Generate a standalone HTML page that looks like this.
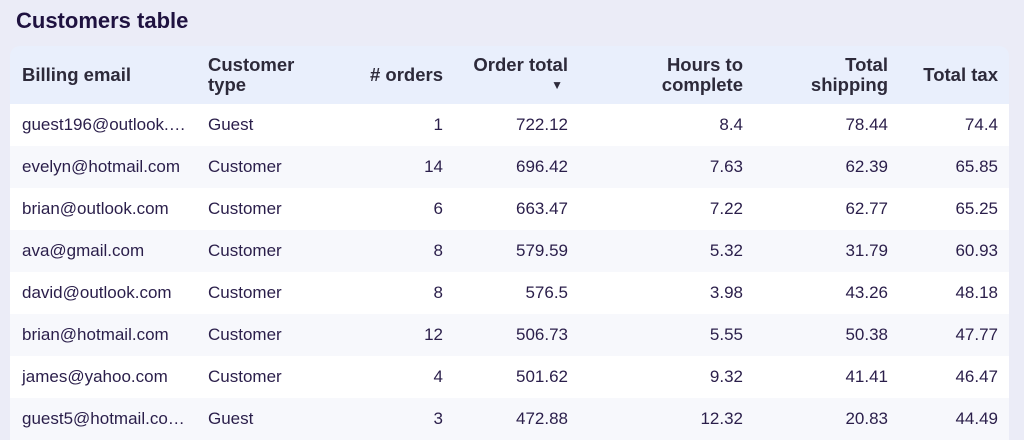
<!DOCTYPE html><html><head><style>
body{margin:0;width:1024px;height:434px;overflow:hidden;background:#ebecf7;font-family:"Liberation Sans",sans-serif;}
h1{position:absolute;left:16px;top:8px;margin:0;font-size:22px;font-weight:bold;color:#1f1240;letter-spacing:0px}
.t{position:absolute;left:10px;top:46px;width:999px;border-radius:10px 10px 0 0;overflow:hidden}
.hd{height:58px;background:#e9effc;position:relative}
.r{height:42px;position:relative;background:#fff}
.r:nth-child(even){background:#f7f8fc}
.c{position:absolute;font-size:17px;color:#2a1e4a;top:11px;white-space:nowrap}
.h{position:absolute;font-size:18.5px;font-weight:bold;color:#2d2a3a;line-height:20px}
.rt{text-align:right}
</style></head><body>
<h1>Customers table</h1>
<div class="t">
<div class="hd">
<div class="h" style="left:12px;top:19px">Billing email</div>
<div class="h" style="left:198px;top:9px">Customer<br>type</div>
<div class="h rt" style="right:566px;top:19px"># orders</div>
<div class="h rt" style="right:441px;top:9px">Order total<br><span style="font-size:12px;margin-right:5px;vertical-align:top">▼</span></div>
<div class="h rt" style="right:266px;top:9px">Hours to<br>complete</div>
<div class="h rt" style="right:121px;top:9px">Total<br>shipping</div>
<div class="h rt" style="right:11px;top:19px">Total tax</div>
</div>
<div>
<div class="r"><span class="c" style="left:12px">guest196@outlook.…</span><span class="c" style="left:198px">Guest</span><span class="c" style="right:566px">1</span><span class="c" style="right:441px">722.12</span><span class="c" style="right:266px">8.4</span><span class="c" style="right:121px">78.44</span><span class="c" style="right:11px">74.4</span></div>
<div class="r"><span class="c" style="left:12px">evelyn@hotmail.com</span><span class="c" style="left:198px">Customer</span><span class="c" style="right:566px">14</span><span class="c" style="right:441px">696.42</span><span class="c" style="right:266px">7.63</span><span class="c" style="right:121px">62.39</span><span class="c" style="right:11px">65.85</span></div>
<div class="r"><span class="c" style="left:12px">brian@outlook.com</span><span class="c" style="left:198px">Customer</span><span class="c" style="right:566px">6</span><span class="c" style="right:441px">663.47</span><span class="c" style="right:266px">7.22</span><span class="c" style="right:121px">62.77</span><span class="c" style="right:11px">65.25</span></div>
<div class="r"><span class="c" style="left:12px">ava@gmail.com</span><span class="c" style="left:198px">Customer</span><span class="c" style="right:566px">8</span><span class="c" style="right:441px">579.59</span><span class="c" style="right:266px">5.32</span><span class="c" style="right:121px">31.79</span><span class="c" style="right:11px">60.93</span></div>
<div class="r"><span class="c" style="left:12px">david@outlook.com</span><span class="c" style="left:198px">Customer</span><span class="c" style="right:566px">8</span><span class="c" style="right:441px">576.5</span><span class="c" style="right:266px">3.98</span><span class="c" style="right:121px">43.26</span><span class="c" style="right:11px">48.18</span></div>
<div class="r"><span class="c" style="left:12px">brian@hotmail.com</span><span class="c" style="left:198px">Customer</span><span class="c" style="right:566px">12</span><span class="c" style="right:441px">506.73</span><span class="c" style="right:266px">5.55</span><span class="c" style="right:121px">50.38</span><span class="c" style="right:11px">47.77</span></div>
<div class="r"><span class="c" style="left:12px">james@yahoo.com</span><span class="c" style="left:198px">Customer</span><span class="c" style="right:566px">4</span><span class="c" style="right:441px">501.62</span><span class="c" style="right:266px">9.32</span><span class="c" style="right:121px">41.41</span><span class="c" style="right:11px">46.47</span></div>
<div class="r"><span class="c" style="left:12px">guest5@hotmail.co…</span><span class="c" style="left:198px">Guest</span><span class="c" style="right:566px">3</span><span class="c" style="right:441px">472.88</span><span class="c" style="right:266px">12.32</span><span class="c" style="right:121px">20.83</span><span class="c" style="right:11px">44.49</span></div>
</div></div>
</body></html>
